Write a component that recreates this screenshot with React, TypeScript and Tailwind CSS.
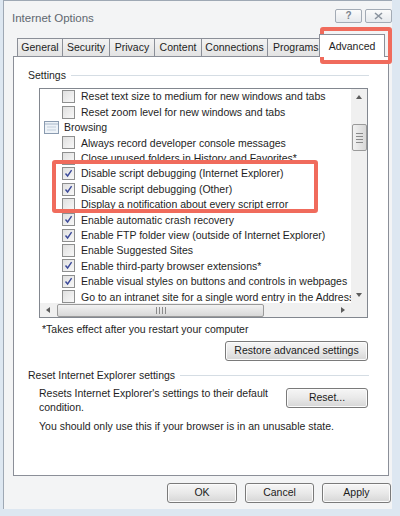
import React from 'react';

type Row = { label: string; kind: 'check' | 'group'; checked?: boolean };

const ROWS: Row[] = [
  { label: 'Reset text size to medium for new windows and tabs', kind: 'check' },
  { label: 'Reset zoom level for new windows and tabs', kind: 'check' },
  { label: 'Browsing', kind: 'group' },
  { label: 'Always record developer console messages', kind: 'check' },
  { label: 'Close unused folders in History and Favorites*', kind: 'check' },
  { label: 'Disable script debugging (Internet Explorer)', kind: 'check', checked: true },
  { label: 'Disable script debugging (Other)', kind: 'check', checked: true },
  { label: 'Display a notification about every script error', kind: 'check' },
  { label: 'Enable automatic crash recovery', kind: 'check', checked: true },
  { label: 'Enable FTP folder view (outside of Internet Explorer)', kind: 'check', checked: true },
  { label: 'Enable Suggested Sites', kind: 'check' },
  { label: 'Enable third-party browser extensions*', kind: 'check', checked: true },
  { label: 'Enable visual styles on buttons and controls in webpages', kind: 'check', checked: true },
  { label: 'Go to an intranet site for a single word entry in the Address bar', kind: 'check' },
];

// tab label + width/alignment classes
const TABS: [string, string][] = [
  ['General', 'w-[46px] justify-center'],
  ['Security', 'w-[48px] justify-center'],
  ['Privacy', 'w-[46px] justify-center'],
  ['Content', 'w-[48px] justify-center'],
  ['Connections', 'w-[67px] justify-center'],
  ['Programs', 'w-[56px] justify-start pl-[5px]'],
];

function CheckBox({ checked }: { checked?: boolean }) {
  return (
    <span className="flex h-[13px] w-[13px] shrink-0 items-center justify-center border border-[#8e8f8f] bg-gradient-to-br from-[#e0e0e0] to-[#f8f8f8]">
      {checked && (
        <svg width="9" height="9" viewBox="0 0 9 9" aria-hidden>
          <path d="M1.5 4.5 L3.6 7 L7.6 1.2" fill="none" stroke="#3c4a9a" strokeWidth="1.4" />
        </svg>
      )}
    </span>
  );
}

function GroupIcon() {
  return (
    <svg width="15" height="13" viewBox="0 0 15 13" aria-hidden className="shrink-0">
      <rect x="0.5" y="0.5" width="14" height="12" fill="#eef3f8" stroke="#8a9bb0" />
      <line x1="1" y1="3" x2="14" y2="3" stroke="#a9b8ca" />
      <line x1="3" y1="6" x2="12" y2="6" stroke="#c3cfdc" />
      <line x1="3" y1="9" x2="12" y2="9" stroke="#c3cfdc" />
    </svg>
  );
}

function Btn({ children, className = '' }: { children: React.ReactNode; className?: string }) {
  return (
    <div
      className={`flex h-[20px] items-center justify-center rounded-[3px] border border-[#7a7a7a] bg-gradient-to-b from-[#f6f6f6] via-[#e9e9e9] to-[#d6d6d6] text-[#1b1b1b] shadow-[inset_0_0_0_1px_#fbfbfb] ${className}`}
    >
      {children}
    </div>
  );
}

function GroupLabel({ children }: { children: React.ReactNode }) {
  return (
    <div className="flex items-center gap-[5px] pl-[14px] pr-[19px]">
      <span className="leading-[14px] text-[#1e1e1e]">{children}</span>
      <span className="h-px flex-1 bg-[#d5dde4]" />
    </div>
  );
}

function Arrow({ dir }: { dir: 'up' | 'down' | 'left' | 'right' }) {
  const d = {
    up: 'M0 4 L3 0 L6 4 Z',
    down: 'M0 0 L6 0 L3 4 Z',
    left: 'M4 0 L4 6 L0 3 Z',
    right: 'M0 0 L4 3 L0 6 Z',
  }[dir];
  const horiz = dir === 'left' || dir === 'right';
  return (
    <svg width={horiz ? 4 : 6} height={horiz ? 6 : 4} viewBox={horiz ? '0 0 4 6' : '0 0 6 4'} aria-hidden>
      <path d={d} fill="#5c5c5c" />
    </svg>
  );
}

export default function App() {
  return (
    <div
      className="relative h-[516px] w-[400px] overflow-hidden bg-[#dde7f1] text-[10.5px]"
      style={{ fontFamily: '"Liberation Sans", Arial, sans-serif' }}
    >
      {/* window client */}
      <div className="ml-[3px] mr-[8px] flex h-[509px] flex-col border-l border-t border-[#9ea8b4] bg-[#f3f4f5]">
        {/* title bar */}
        <div className="flex h-[26px] items-start justify-between pl-[8px]">
          <span className="mt-[10px] text-[11.5px] leading-[14px] text-[#5f6770]">Internet Options</span>
          <div className="mt-[8px] flex gap-[3px]">
            <div className="flex h-[14px] w-[27px] items-center justify-center rounded-[2px] border border-[#a3abb5] bg-gradient-to-b from-[#fbfbfb] to-[#e6e9ed] text-[10px] font-bold leading-none text-[#7a838e]">
              ?
            </div>
            <div className="flex h-[14px] w-[27px] items-center justify-center rounded-[2px] border border-[#a3abb5] bg-gradient-to-b from-[#fbfbfb] to-[#e6e9ed]">
              <svg width="9" height="8" viewBox="0 0 9 8" aria-hidden>
                <path d="M1 1 L8 7 M8 1 L1 7" stroke="#8a939e" strokeWidth="1.6" />
              </svg>
            </div>
          </div>
        </div>

        {/* tabs */}
        <div className="ml-[13px] mt-[6px] flex h-[23px] items-end">
          {TABS.map(([t, w]) => (
            <div
              key={t}
              className={`-mr-px flex h-[18px] items-center overflow-hidden whitespace-nowrap border border-b-0 border-[#8b8f98] bg-gradient-to-b from-[#f3f3f3] to-[#e3e3e3] leading-none text-[#1e1e1e] ${w}`}
            >
              {t}
            </div>
          ))}
          <div className="relative z-10 -mb-px -ml-[3px] flex h-[23px] w-[66px] items-center justify-center border border-b-0 border-[#8b8f98] bg-white leading-none text-[#1e1e1e]">
            Advanced
          </div>
        </div>

        {/* pane */}
        <div className="ml-[9px] mr-[3px] flex h-[420px] flex-col border border-[#8b8f98] bg-white">
          <div className="mt-[11px]">
            <GroupLabel>Settings</GroupLabel>
          </div>

          {/* list box */}
          <div className="ml-[25px] mr-[20px] mt-[6px] flex h-[230px] flex-col border border-[#82878f]">
            <div className="flex h-[214px]">
              <div className="flex-1 overflow-hidden">
                {ROWS.map((r) => (
                  <div key={r.label} className="flex h-[15.4px] items-center whitespace-nowrap leading-none text-[#1e1e1e]">
                    {r.kind === 'group' ? (
                      <>
                        <span className="ml-[4px] mr-[5px]">
                          <GroupIcon />
                        </span>
                        <span>{r.label}</span>
                      </>
                    ) : (
                      <>
                        <span className="ml-[22px] mr-[6px]">
                          <CheckBox checked={r.checked} />
                        </span>
                        <span>{r.label}</span>
                      </>
                    )}
                  </div>
                ))}
              </div>
              {/* vertical scrollbar */}
              <div className="flex w-[16px] shrink-0 flex-col items-center bg-[#f0f0f0]">
                <div className="flex h-[16px] items-center">
                  <Arrow dir="up" />
                </div>
                <div className="mt-[19px] flex h-[27px] w-[15px] flex-col items-center justify-center gap-[2px] rounded-[2px] border border-[#9a9a9a] bg-gradient-to-r from-[#f2f2f2] to-[#d8d8d8]">
                  <span className="h-px w-[7px] bg-[#8a8a8a]" />
                  <span className="h-px w-[7px] bg-[#8a8a8a]" />
                  <span className="h-px w-[7px] bg-[#8a8a8a]" />
                  <span className="h-px w-[7px] bg-[#8a8a8a]" />
                </div>
                <div className="flex-1" />
                <div className="flex h-[16px] items-center">
                  <Arrow dir="down" />
                </div>
              </div>
            </div>
            {/* horizontal scrollbar */}
            <div className="flex h-[14px] items-center bg-[#f0f0f0]">
              <div className="flex w-[16px] justify-center">
                <Arrow dir="left" />
              </div>
              <div className="ml-[1px] flex h-[13px] w-[207px] items-center justify-center gap-[2px] rounded-[2px] border border-[#9a9a9a] bg-gradient-to-b from-[#f2f2f2] to-[#d8d8d8]">
                <span className="h-[7px] w-px bg-[#8a8a8a]" />
                <span className="h-[7px] w-px bg-[#8a8a8a]" />
                <span className="h-[7px] w-px bg-[#8a8a8a]" />
                <span className="h-[7px] w-px bg-[#8a8a8a]" />
              </div>
              <div className="flex-1" />
              <div className="flex w-[16px] justify-center">
                <Arrow dir="right" />
              </div>
              <div className="h-full w-[16px] bg-[#f0f0f0]" />
            </div>
          </div>

          <div className="ml-[28px] mt-[4px] leading-[14px] text-[#1e1e1e]">*Takes effect after you restart your computer</div>

          <div className="mr-[20px] mt-[5px] flex justify-end">
            <Btn className="w-[143px]">Restore advanced settings</Btn>
          </div>

          <div className="mt-[7px]">
            <GroupLabel>Reset Internet Explorer settings</GroupLabel>
          </div>

          <div className="ml-[25px] mr-[20px] mt-[4px] flex items-start justify-between text-[#1e1e1e]">
            <div className="w-[232px] leading-[14px]">
              Resets Internet Explorer&apos;s settings to their default condition.
            </div>
            <Btn className="mt-[2px] w-[82px]">Reset...</Btn>
          </div>

          <div className="ml-[25px] mt-[5px] leading-[14px] text-[#1e1e1e]">
            You should only use this if your browser is in an unusable state.
          </div>
        </div>

        {/* dialog buttons */}
        <div className="mr-[1px] mt-[7px] flex justify-end gap-[8px]">
          <Btn className="w-[70px]">OK</Btn>
          <Btn className="w-[69px]">Cancel</Btn>
          <Btn className="w-[69px]">Apply</Btn>
        </div>
      </div>

      {/* highlight boxes */}
      <div className="absolute left-[320px] top-[27px] h-[37px] w-[72px] rounded-[3px] border-[4px] border-[#f06b5c]" />
      <div className="absolute left-[52px] top-[160px] h-[53px] w-[266px] rounded-[3px] border-[4px] border-[#f06b5c]" />
    </div>
  );
}
